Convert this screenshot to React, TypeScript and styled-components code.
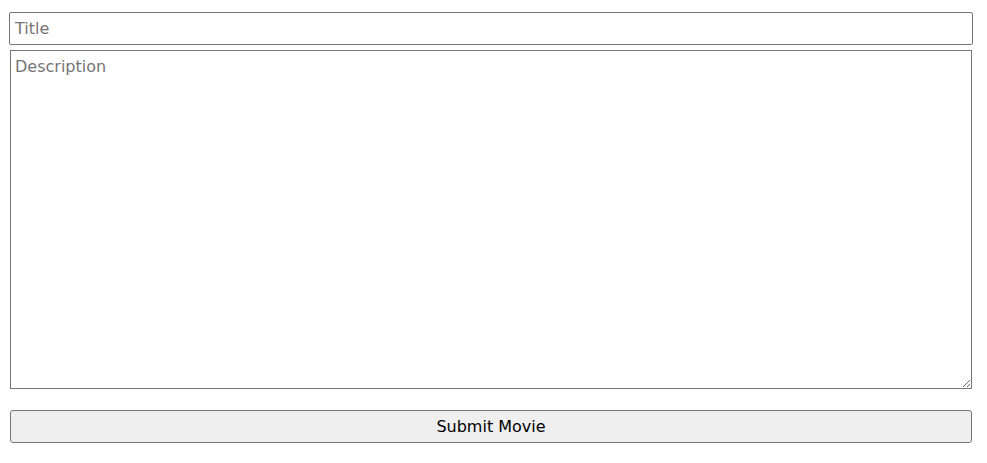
import * as React from 'react'
import styled, { createGlobalStyle } from 'styled-components'

const GlobalStyle = createGlobalStyle`
  html, body {
    margin: 0;
    padding: 0;
    background: #ffffff;
  }
`

const Form = styled.form`
  display: flex;
  flex-direction: column;
  padding: 12px 15px 0 9px;
  font-family: 'DejaVu Sans', Verdana, sans-serif;
`

const TitleInput = styled.input`
  box-sizing: border-box;
  width: 964px;
  height: 33px;
  margin: 0;
  padding: 0 5px;
  border: 1px solid #767676;
  border-radius: 2px;
  font-family: inherit;
  font-size: 16px;
  color: #222;
  background: #fff;
  &::placeholder {
    color: #757575;
  }
  &:focus {
    outline: none;
  }
`

const DescriptionInput = styled.textarea`
  box-sizing: border-box;
  width: 962px;
  height: 339px;
  margin: 5px 0 0 1px;
  padding: 6px 4px 5px;
  border: 1px solid #767676;
  font-family: inherit;
  font-size: 16px;
  line-height: 20px;
  color: #222;
  background: #fff;
  &::placeholder {
    color: #757575;
  }
  &:focus {
    outline: none;
  }
`

const SubmitButton = styled.button`
  box-sizing: border-box;
  width: 962px;
  height: 33px;
  margin: 21px 0 0 1px;
  padding: 0;
  border: 1px solid #767676;
  border-radius: 3px;
  background: #efefef;
  color: #000;
  font-family: inherit;
  font-size: 16px;
  cursor: pointer;
`

export default function App() {
  return (
    <>
      <GlobalStyle />
      <Form action="javascript:void(0);">
        <TitleInput type="text" placeholder="Title" />
        <DescriptionInput placeholder="Description" />
        <SubmitButton type="submit">Submit Movie</SubmitButton>
      </Form>
    </>
  )
}
